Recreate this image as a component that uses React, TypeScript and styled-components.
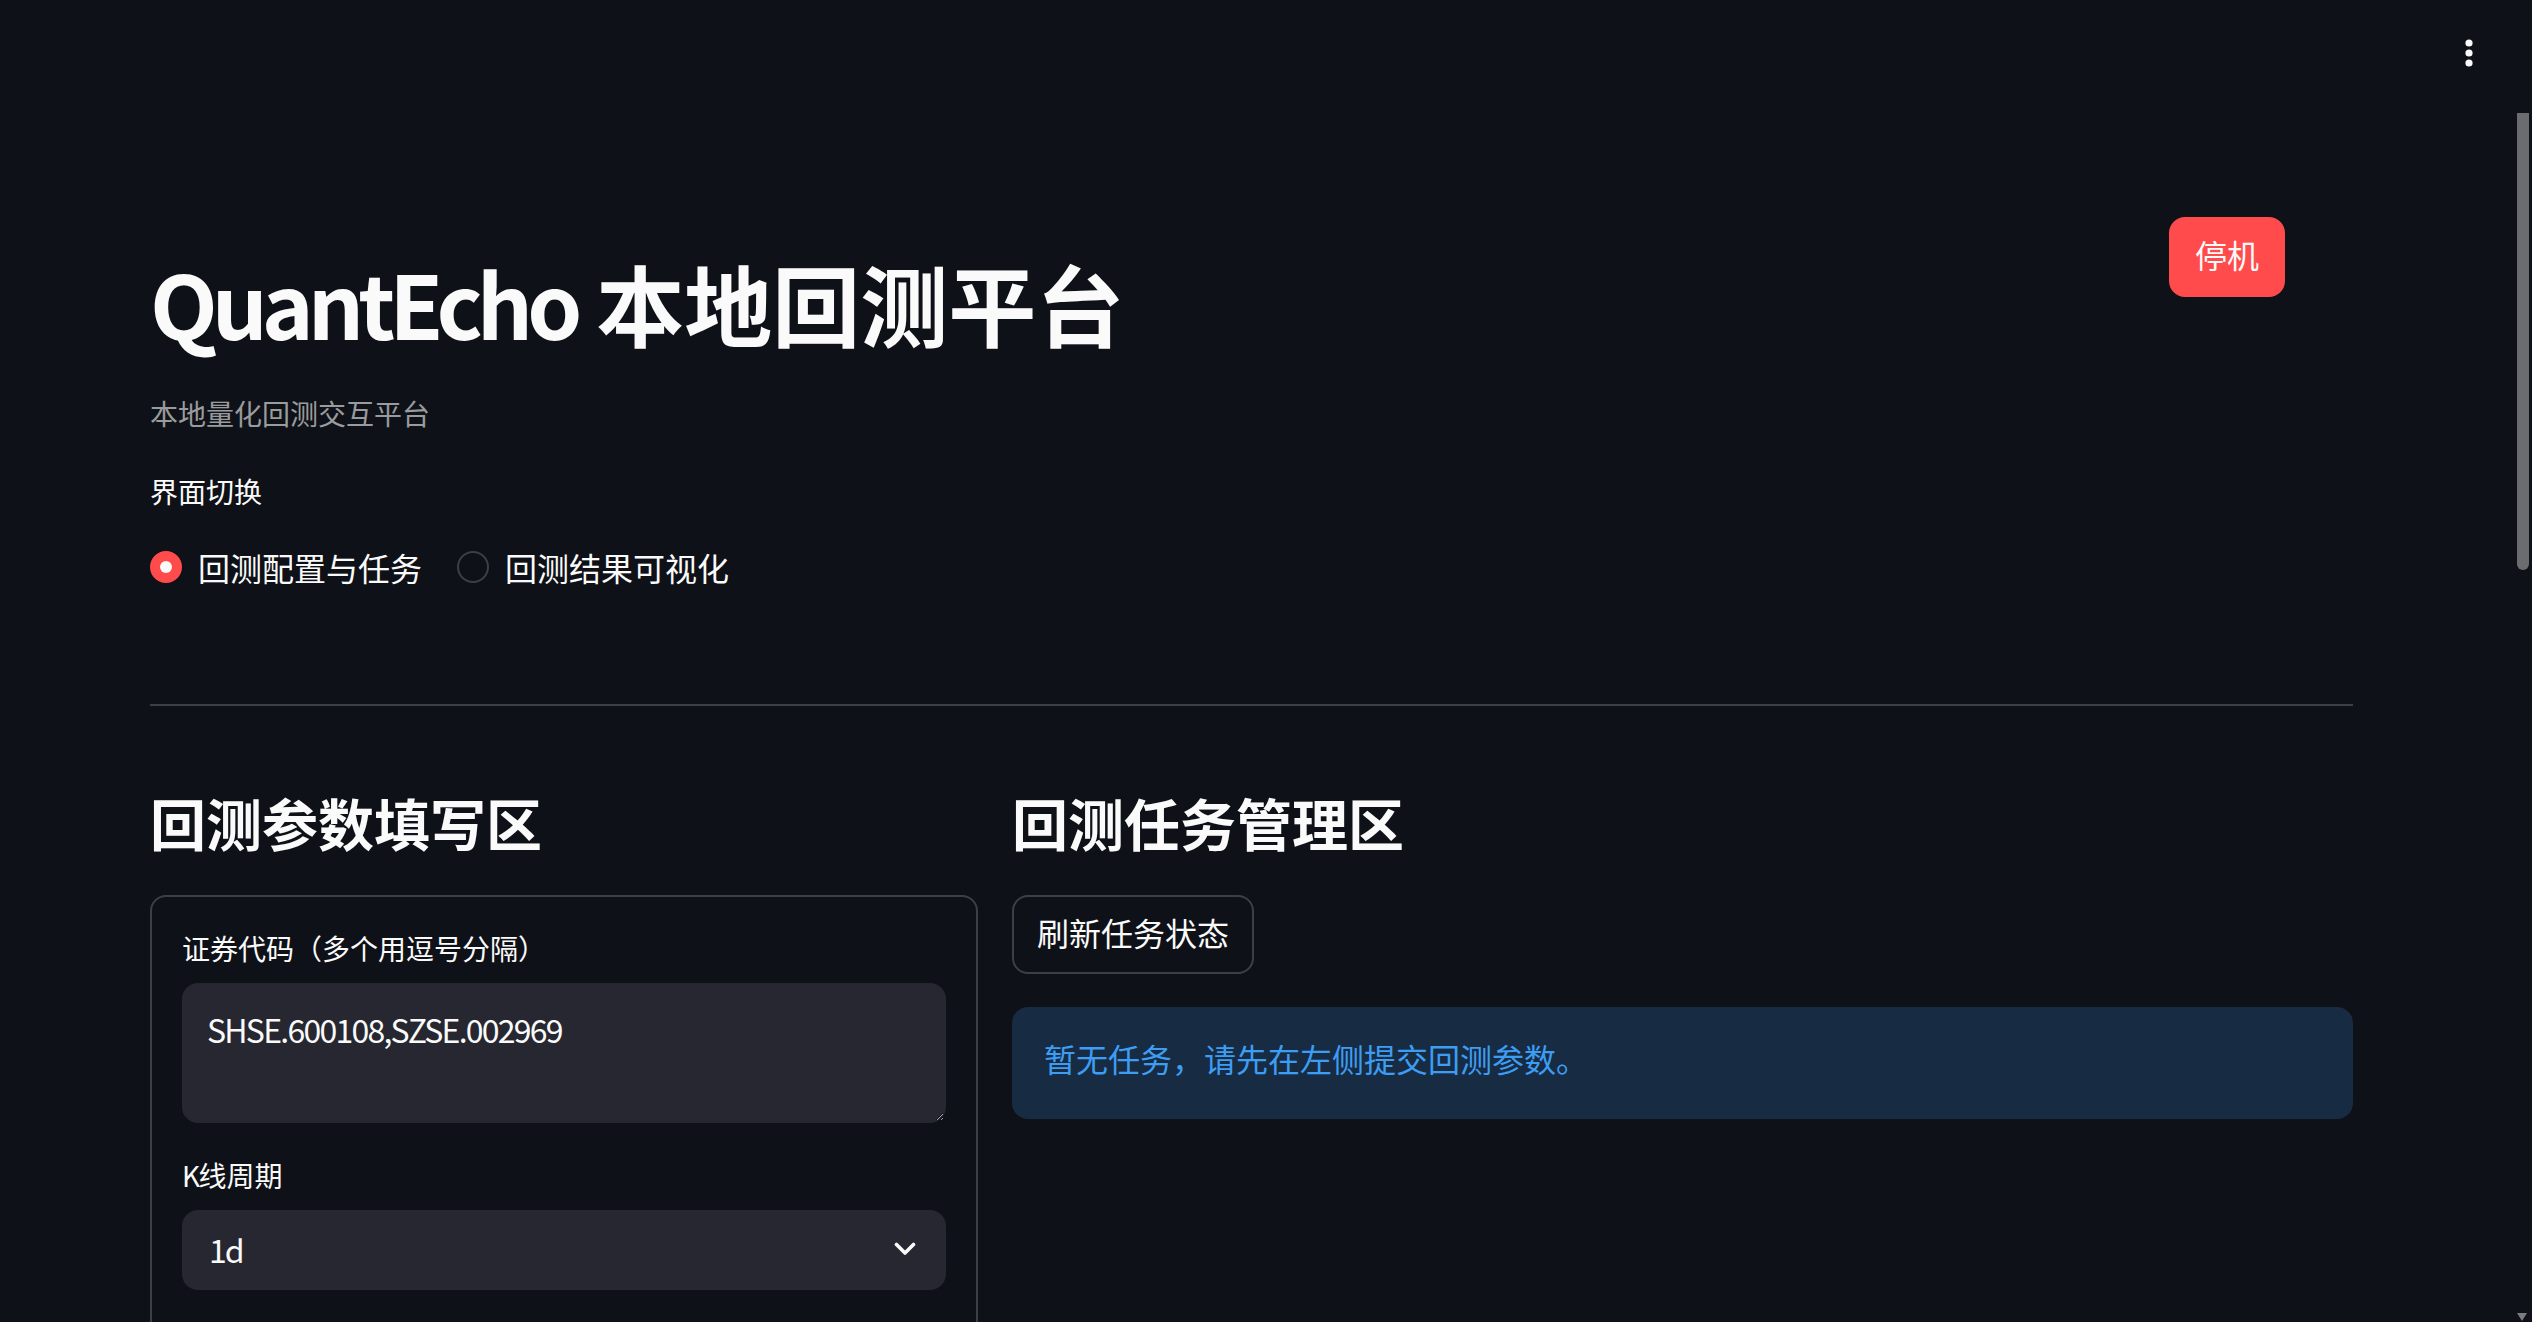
import React from "react";
import styled, { createGlobalStyle } from "styled-components";

const Global = createGlobalStyle`
  html, body { margin: 0; padding: 0; background: #0e1117; }
  body { font-family: "Noto Sans CJK SC", "Noto Sans", sans-serif; color: #fafafa; }
  * { box-sizing: border-box; }
`;

const Page = styled.div`
  position: relative;
  height: 1322px;
  overflow: hidden;
  background: #0e1117;
  color: #fafafa;
  font-family: "Noto Sans CJK SC", "Noto Sans", sans-serif;
`;

const Latin = styled.span<{ $tight?: number }>`
  letter-spacing: ${(p) => p.$tight ?? -0.06}em;
`;

const Header = styled.header`
  height: 120px;
  display: flex;
  justify-content: flex-end;
  align-items: flex-start;
  padding: 36px 56px 0 0;
`;

const MenuButton = styled.div`
  width: 14px;
  height: 34px;
  display: flex;
  justify-content: center;
`;

const Main = styled.main`
  padding: 97px 179px 0 150px;
  display: flex;
  flex-direction: column;
`;

const TitleRow = styled.div`
  display: grid;
  grid-template-columns: 1fr 184px;
  align-items: start;
`;

const Title = styled.h1`
  margin: 32px 0 0 0;
  font-size: 88px;
  line-height: 106px;
  font-weight: 700;
  letter-spacing: 0;
`;

const Button = styled.button<{ $primary?: boolean }>`
  font-family: inherit;
  font-size: 32px;
  line-height: 1.6;
  color: #fafafa;
  border-radius: 16px;
  display: flex;
  align-items: center;
  justify-content: center;
  padding: 0 0 4px 0;
  white-space: nowrap;
  cursor: pointer;
  background: ${(p) => (p.$primary ? "#ff4b4b" : "transparent")};
  border: 2px solid ${(p) => (p.$primary ? "#ff4b4b" : "rgba(250,250,250,0.2)")};
  width: ${(p) => (p.$primary ? "116px" : "242px")};
  height: ${(p) => (p.$primary ? "80px" : "79px")};
  margin-top: ${(p) => (p.$primary ? "0" : "37px")};
`;

const Subtitle = styled.p`
  margin: 36px 0 0 0;
  font-size: 28px;
  line-height: 44.8px;
  color: rgba(250, 250, 250, 0.6);
`;

const FieldLabel = styled.div<{ $mt?: number }>`
  margin-top: ${(p) => p.$mt ?? 0}px;
  font-size: 28px;
  line-height: 42px;
  color: #fafafa;
`;

const RadioGroup = styled.div`
  margin-top: 29px;
  display: flex;
  align-items: center;
  gap: 35px;
  height: 52px;
`;

const RadioItem = styled.label`
  display: flex;
  align-items: center;
  gap: 16px;
  font-size: 32px;
  line-height: 52px;
`;

const RadioDot = styled.span<{ $checked?: boolean }>`
  width: 32px;
  height: 32px;
  border-radius: 50%;
  flex: none;
  display: flex;
  align-items: center;
  justify-content: center;
  background: ${(p) => (p.$checked ? "#ff4b4b" : "#0e1117")};
  border: 2px solid ${(p) => (p.$checked ? "#ff4b4b" : "rgba(250,250,250,0.2)")};
  &::after {
    content: "";
    width: 12px;
    height: 12px;
    border-radius: 50%;
    background: #fafafa;
    display: ${(p) => (p.$checked ? "block" : "none")};
  }
`;

const Divider = styled.hr`
  margin: 111px 0 0 0;
  border: none;
  height: 2px;
  background: rgba(250, 250, 250, 0.2);
`;

const Columns = styled.div`
  margin-top: 79px;
  display: flex;
  gap: 34px;
`;

const Column = styled.div<{ $width?: number }>`
  display: flex;
  flex-direction: column;
  ${(p) => (p.$width ? `width: ${p.$width}px; flex: none;` : "flex: 1;")}
`;

const SectionTitle = styled.h3`
  margin: 0;
  font-size: 56px;
  line-height: 73px;
  font-weight: 700;
`;

const Card = styled.div`
  margin-top: 37px;
  border: 2px solid rgba(250, 250, 250, 0.2);
  border-radius: 16px;
  padding: 30px;
  min-height: 700px;
  display: flex;
  flex-direction: column;
`;

const TextArea = styled.textarea`
  margin-top: 14px;
  width: 100%;
  height: 140px;
  background: #262730;
  border: 2px solid #262730;
  border-radius: 16px;
  color: #fafafa;
  color-scheme: dark;
  font-family: "Noto Sans CJK SC", "Noto Sans", sans-serif;
  font-size: 32px;
  line-height: 51px;
  letter-spacing: -0.055em;
  padding: 19px 23px 0 23px;
  resize: vertical;
  outline: none;
`;

const Select = styled.div`
  margin-top: 14px;
  height: 80px;
  background: #262730;
  border-radius: 16px;
  display: flex;
  align-items: center;
  justify-content: space-between;
  padding: 0 30px 2px 27px;
  font-size: 32px;
  color: #fafafa;
`;

const InfoBox = styled.div`
  margin-top: 33px;
  height: 112px;
  border-radius: 16px;
  background: rgba(61, 157, 243, 0.2);
  color: #3d9df3;
  font-size: 32px;
  display: flex;
  align-items: center;
  padding: 0 32px 9px 32px;
`;

const ScrollThumb = styled.div`
  position: absolute;
  right: 3px;
  top: 113px;
  width: 12px;
  height: 457px;
  background: #6b6c70;
  border-radius: 0 0 6px 6px;
`;

const ScrollArrow = styled.div`
  position: absolute;
  right: 5px;
  bottom: 1px;
  width: 0;
  height: 0;
  border-left: 5px solid transparent;
  border-right: 5px solid transparent;
  border-top: 8px solid #7a7b7f;
`;

export default function App() {
  return (
    <Page>
      <Global />
      <Header>
        <MenuButton>
          <svg width="10" height="34" viewBox="0 0 10 34">
            <circle cx="5" cy="7" r="3.6" fill="#fafafa" />
            <circle cx="5" cy="17" r="3.6" fill="#fafafa" />
            <circle cx="5" cy="27" r="3.6" fill="#fafafa" />
          </svg>
        </MenuButton>
      </Header>
      <Main>
        <TitleRow>
          <Title>
            <Latin $tight={-0.068}>QuantEcho</Latin> 本地回测平台
          </Title>
          <Button $primary>停机</Button>
        </TitleRow>
        <Subtitle>本地量化回测交互平台</Subtitle>
        <FieldLabel $mt={34}>界面切换</FieldLabel>
        <RadioGroup>
          <RadioItem>
            <RadioDot $checked />
            回测配置与任务
          </RadioItem>
          <RadioItem>
            <RadioDot />
            回测结果可视化
          </RadioItem>
        </RadioGroup>
        <Divider />
        <Columns>
          <Column $width={828}>
            <SectionTitle>回测参数填写区</SectionTitle>
            <Card>
              <FieldLabel>证券代码（多个用逗号分隔）</FieldLabel>
              <TextArea readOnly defaultValue="SHSE.600108,SZSE.002969" />
              <FieldLabel $mt={31}>
                <Latin>K</Latin>线周期
              </FieldLabel>
              <Select>
                <Latin>1d</Latin>
                <svg width="22" height="14" viewBox="0 0 22 14">
                  <path d="M2.5 2.5 L11 11 L19.5 2.5" fill="none" stroke="#fafafa" strokeWidth="3.6" strokeLinecap="round" strokeLinejoin="round" />
                </svg>
              </Select>
            </Card>
          </Column>
          <Column>
            <SectionTitle>回测任务管理区</SectionTitle>
            <Button>刷新任务状态</Button>
            <InfoBox>暂无任务，请先在左侧提交回测参数。</InfoBox>
          </Column>
        </Columns>
      </Main>
      <ScrollThumb />
      <ScrollArrow />
    </Page>
  );
}
